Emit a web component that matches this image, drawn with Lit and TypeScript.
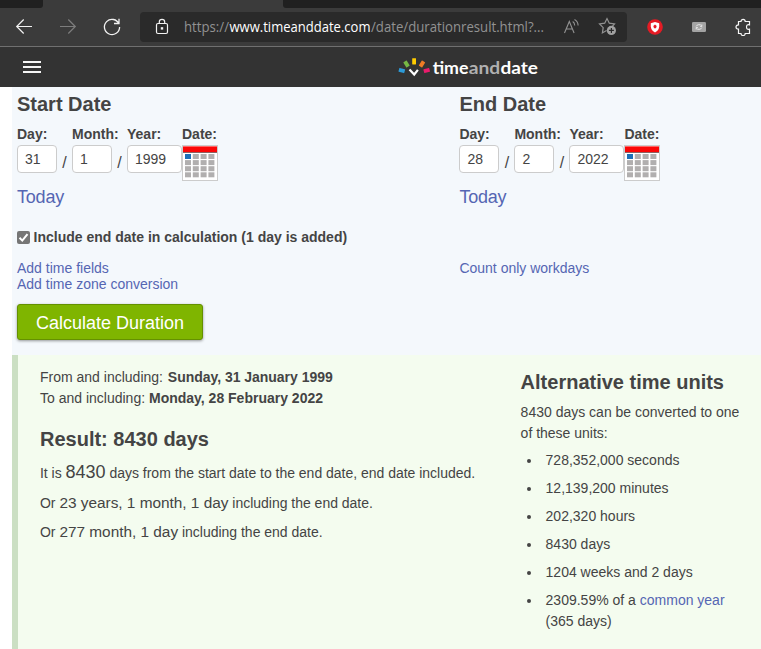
import { LitElement, html, css, svg } from "lit";
import { customElement, property } from "lit/decorators.js";

@customElement("browser-bar")
class BrowserBar extends LitElement {
  static styles = css`
    :host { display: block; background: #3b3b3b; border-bottom: 1px solid #707070; height: 46px; }
    .tabs { display: flex; justify-content: space-between; height: 8px; }
    .tab { background: #202020; }
    .left { width: 43px; border-bottom-right-radius: 3px; }
    .right { width: 478px; border-bottom-left-radius: 3px; }
    .bar { display: flex; align-items: center; height: 38px; box-sizing: border-box; padding: 0 0 0 14px; }
    svg { display: block; flex: none; }
    .fwd { margin-left: 24px; }
    .reload { margin-left: 24px; }
    .address { display: flex; align-items: center; box-sizing: border-box; width: 487px; height: 30px; margin-left: 18px; padding-left: 12px; background: #2a2a2a; border-radius: 4px; }
    .url { flex: none; width: 364px; margin-left: 12px; font: 14.3px/20px "Open Sans", "Noto Sans", sans-serif; color: #929292; white-space: nowrap; }
    .url svg { overflow: visible; }
    .host { fill: #fff; }
    .read { margin-left: 14px; }
    .star { margin-left: 16px; }
    .shield { margin-left: 20px; }
    .cam { margin-left: 29px; }
    .ext { margin-left: 29px; }
  `;
  render() {
    return html`
      <div class="tabs"><div class="tab left"></div><div class="tab right"></div></div>
      <div class="bar">
        <svg width="20" height="20" viewBox="0 0 20 20" fill="none" stroke="#f2f2f2" stroke-width="1.2"><path d="M18 9.5H2.5M9.7 2.5l-7 7 7 7"/></svg>
        <svg class="fwd" width="20" height="20" viewBox="0 0 20 20" fill="none" stroke="#7d7d7d" stroke-width="1.2"><path d="M2 9.5h15.5M10.3 2.5l7 7-7 7"/></svg>
        <svg class="reload" width="20" height="20" viewBox="0 0 20 20" fill="none" stroke="#f2f2f2" stroke-width="1.3"><path d="M17 7A7.6 7.6 0 1 0 17.6 10M17 1.8V6.5H12"/></svg>
        <div class="address">
          <svg width="20" height="20" viewBox="0 0 20 20" fill="none" stroke="#f2f2f2" stroke-width="1.2"><rect x="4.5" y="6.5" width="11" height="10" rx="1.5"/><path d="M7.3 6.5V5a2.7 2.7 0 0 1 5.4 0v1.5"/><rect x="9.4" y="10.8" width="1.2" height="1.2" fill="#fff"/></svg>
          <div class="url"><svg width="364" height="20"><text y="15" fill="#929292"><tspan textLength="45" lengthAdjust="spacingAndGlyphs">https://</tspan><tspan class="host" x="45.5" textLength="141" lengthAdjust="spacingAndGlyphs">www.timeanddate.com</tspan><tspan x="187" textLength="173" lengthAdjust="spacingAndGlyphs">/date/durationresult.html?...</tspan></text></svg></div>
          <svg class="read" width="20" height="20" viewBox="0 0 20 20" fill="none" stroke="#929292" stroke-width="1.1"><path d="M2.5 16 7.3 4.5 12.1 16M4.2 12h6.2M10.7 4.5q2 1.2 2 4M12.5 2.5q3.6 2 3.6 6"/></svg>
          <svg class="star" width="20" height="20" viewBox="0 0 20 20"><path d="M8.5 13.6l-4.1 2.3.8-5.2L1.5 7l5.2-.8L9 1.5l2.3 4.7 5.2.8-2 2" fill="none" stroke="#929292" stroke-width="1.2"/><circle cx="13.4" cy="13.4" r="4.6" fill="#a0a0a0"/><path d="M10.9 13.4h5M13.4 10.9v5" stroke="#2a2a2a" stroke-width="1.2"/></svg>
        </div>
        <svg class="shield" width="16" height="16" viewBox="0 0 16 16"><circle cx="8" cy="8" r="7.8" fill="#e51b24"/><path d="M8 3l4.2 1.3v3Q12 11.5 8 13.4 4 11.5 3.8 7.3v-3z" fill="#fff"/><path d="M8 5.6l1.7 1.3L9 9.3H7l-.7-2.4z" fill="#e51b24"/></svg>
        <svg class="cam" width="14" height="16" viewBox="0 0 14 16"><rect x="0" y="3" width="14" height="10" rx="1.3" fill="#a3a3a3"/><path d="M4.2 7.4A3 2.6 0 0 1 9.7 7M9.8 8.6A3 2.6 0 0 1 4.3 9M9.8 5.5v2H8.2M4.2 10.5v-2h1.6" fill="none" stroke="#e6e6e6" stroke-width="1"/></svg>
        <svg class="ext" width="18" height="18" viewBox="0 0 18 18" fill="none" stroke="#f5f5f5" stroke-width="1.2"><path d="M3.5 3.5H6a2.1 2.1 0 0 1 4.2 0h4.3v3.3q-3-.7-3 2.2t3 2.2v4.3h-4.3a2.1 2.1 0 0 1-4.2 0H3.5v-4.3Q1 11.2 1 9t2.5-2.2z"/></svg>
      </div>`;
  }
}

@customElement("site-header")
class SiteHeader extends LitElement {
  static styles = css`
    :host { display: flex; align-items: center; height: 40px; background: #333; }
    svg { display: block; }
    .menu { margin-left: 22px; width: 20px; height: 12px; }
    .logo { margin-left: 356px; }
    .word { font: 700 17.5px Lato, "Open Sans", sans-serif; }
  `;
  render() {
    return html`
      <svg class="menu" width="20" height="12" viewBox="0 0 20 12" fill="#f5f5f5"><path d="M1 0h18v2H1zM1 5h18v2H1zM1 10h18v2H1z"/></svg>
      <svg class="logo" width="142" height="26" viewBox="398 54 142 26">
        <rect x="-3" y="-2" width="6" height="4" rx=".4" fill="#2d9bd8" transform="translate(401.8 70.5) rotate(15)"/>
        <rect x="-3" y="-2" width="6" height="4" rx=".4" fill="#76b843" transform="translate(406.5 64) rotate(58)"/>
        <rect x="412.2" y="58.2" width="3.8" height="6.2" rx=".4" fill="#fc0"/>
        <rect x="-3" y="-2" width="6" height="4" rx=".4" fill="#ee7c25" transform="translate(422 64) rotate(-58)"/>
        <rect x="-3" y="-2" width="6" height="4" rx=".4" fill="#ea1c6c" transform="translate(426.7 70.5) rotate(-15)"/>
        <path d="M409.5 69.5l4.7 5 3.7-4.6" fill="none" stroke="#fff" stroke-width="2.2"/>
        <g class="word"><text x="432.7" y="74" fill="#fff" textLength="35.8" lengthAdjust="spacingAndGlyphs">time</text><text x="468.7" y="74" fill="#b0b0b0" textLength="31.5" lengthAdjust="spacingAndGlyphs">and</text><text x="500.5" y="74" fill="#fff" textLength="37.5" lengthAdjust="spacingAndGlyphs">date</text></g>
      </svg>`;
  }
}

@customElement("date-fields")
class DateFields extends LitElement {
  @property() heading = "";
  @property() day = "";
  @property() month = "";
  @property() year = "";
  static styles = css`
    :host { display: block; font-size: 14px; }
    h2 { margin: 0; font-size: 20px; line-height: 24px; padding-top: 5px; }
    .row { display: flex; height: 47px; margin-top: 10px; }
    .small { width: 40px; }
    .year { width: 55px; }
    .label { font-weight: bold; line-height: 16px; white-space: nowrap; }
    .box { box-sizing: border-box; height: 28px; margin-top: 3px; padding-left: 7px; border: 1px solid #ccc; border-radius: 4px; background: #fff; line-height: 27px; }
    .slash { width: 15px; text-align: center; font-size: 16px; line-height: 16px; padding-top: 29px; box-sizing: border-box; }
    svg { display: block; margin-top: 3px; }
    .today { display: block; margin-top: 11px; font-size: 18px; letter-spacing: -0.2px; line-height: 26px; color: #5566b3; text-decoration: none; }
  `;
  render() {
    const cells = [];
    for (let r = 0; r < 4; r++)
      for (let c = 0; c < 4; c++)
        cells.push(svg`<rect x=${3 + c * 7.8} y=${9 + r * 6.1} width="6" height="5" fill=${r + c ? "#b1afaf" : "#1b70b8"}></rect>`);
    return html`
      <h2>${this.heading}</h2>
      <div class="row">
        <div class="small"><div class="label">Day:</div><div class="box">${this.day}</div></div>
        <div class="slash">/</div>
        <div class="small"><div class="label">Month:</div><div class="box">${this.month}</div></div>
        <div class="slash">/</div>
        <div class="year"><div class="label">Year:</div><div class="box">${this.year}</div></div>
        <div><div class="label">Date:</div>
          <svg width="36" height="36" viewBox="0 0 36 36"><rect x=".5" y=".5" width="35" height="35" fill="#fff" stroke="#ccc"/><path d="M1 1h34v6H1z" fill="#fb0707"/><path d="M1 1h34v1H1z" fill="#f66"/><path d="M1 7h34v1H1z" fill="#8c6262"/>${cells}</svg>
        </div>
      </div>
      <a class="today">Today</a>`;
  }
}

@customElement("app-root")
class AppRoot extends LitElement {
  static styles = css`
    :host { display: block; height: 649px; overflow: hidden; background: #fff; font: 14px/21px "Liberation Sans", Arial, sans-serif; color: #444; }
    a { color: #5566b3; text-decoration: none; }
    .form { box-sizing: border-box; height: 268px; margin-left: 12px; padding-left: 5px; background: #f4f8fc; }
    .dates, .links { display: grid; grid-template-columns: 442.4px 1fr; }
    .dates { height: 124px; }
    .check { display: flex; align-items: center; height: 16px; margin-top: 18px; font-weight: bold; }
    .check svg { margin-right: 3.6px; }
    .links { margin-top: 15px; line-height: 16px; }
    .links a { display: block; }
    .button { box-sizing: border-box; display: flex; justify-content: center; width: 186px; height: 36px; margin-top: 12px; background: #7fb500; border: 1px solid #659100; border-radius: 3px; box-shadow: 0 1px 3px rgba(0,0,0,.4); color: #fff; font-size: 18px; line-height: 36px; }
    .result { box-sizing: border-box; display: grid; grid-template-columns: 480.6px 1fr; height: 294px; margin-left: 12px; padding: 12px 0 0 22px; border-left: 6px solid #cbdfc3; background: #f4fcef; }
    h2 { margin: 0; font-size: 20px; line-height: 24px; }
    h2.total { margin: 18px 0 11px; }
    p { margin: 0; white-space: nowrap; }
    .from { margin-left: 1px; letter-spacing: -0.03px; }
    p.line { height: 21px; margin-bottom: 9px; letter-spacing: -0.015px; }
    p.line.near { margin-bottom: 8px; }
    .big { font-size: 18px; }
    .mid { font-size: 15.4px; }
    .alt { padding-top: 3px; }
    .alt p { margin-top: 8px; }
    ul { margin: 6px 0 0; padding: 0; list-style: none; }
    li { display: flex; align-items: flex-start; margin-bottom: 7px; }
    li::before { content: ""; flex: none; width: 4px; height: 4px; margin: 9px 14.4px 0 6.6px; border-radius: 50%; background: #444; }
  `;
  render() {
    return html`
      <browser-bar></browser-bar>
      <site-header></site-header>
      <div class="form">
        <div class="dates">
          <date-fields heading="Start Date" day="31" month="1" year="1999"></date-fields>
          <date-fields heading="End Date" day="28" month="2" year="2022"></date-fields>
        </div>
        <div class="check"><svg width="13" height="13" viewBox="0 0 13 13"><rect width="13" height="13" rx="2" fill="#767676"/><path d="M2.5 6.8l2.8 2.8 5.2-6.5" fill="none" stroke="#fff" stroke-width="2"/></svg>Include end date in calculation (1 day is added)</div>
        <div class="links"><div><a>Add time fields</a><a>Add time zone conversion</a></div><a>Count only workdays</a></div>
        <div class="button">Calculate Duration</div>
      </div>
      <div class="result">
        <div>
          <p>From and including: <b class="from">Sunday, 31 January 1999</b></p>
          <p>To and including: <b>Monday, 28 February 2022</b></p>
          <h2 class="total">Result: 8430 days</h2>
          <p class="line">It is <span class="big">8430</span> days from the start date to the end date, end date included.</p>
          <p class="line near">Or <span class="mid">23 years, 1 month, 1 day</span> including the end date.</p>
          <p class="line">Or <span class="mid">277 month, 1 day</span> including the end date.</p>
        </div>
        <div class="alt">
          <h2>Alternative time units</h2>
          <p>8430 days can be converted to one<br>of these units:</p>
          <ul>
            <li>728,352,000 seconds</li><li>12,139,200 minutes</li><li>202,320 hours</li><li>8430 days</li><li>1204 weeks and 2 days</li><li><span>2309.59% of a <a>common year</a><br>(365 days)</span></li>
          </ul>
        </div>
      </div>`;
  }
}
